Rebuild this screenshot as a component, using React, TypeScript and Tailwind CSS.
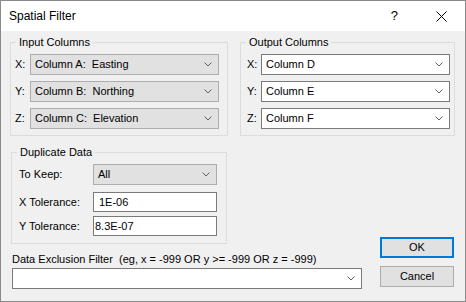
import React from "react";

const Chevron = () => (
  <svg width="8" height="5" viewBox="0 0 8 5" className="shrink-0">
    <polyline points="0.5,0.5 4,4 7.5,0.5" fill="none" stroke="#606060" strokeWidth="1" />
  </svg>
);

function Combo({ text, grey, className }: { text: string; grey?: boolean; className?: string }) {
  return (
    <div
      className={
        "h-[21px] flex items-center justify-between pl-[4px] pr-[6px] border " +
        (grey ? "bg-[#e1e1e1] border-[#adadad] " : "bg-white border-[#7a7a7a] ") +
        (className ?? "")
      }
    >
      <span className="whitespace-pre leading-[13px]">{text}</span>
      <Chevron />
    </div>
  );
}

export default function App() {
  return (
    <div className="w-[466px] h-[302px] border border-[#8a8a8a] bg-[#f0f0f0] flex flex-col text-[11px] leading-[13px] text-black font-['Liberation_Sans',Arial,sans-serif]">
      {/* Title bar */}
      <div className="h-[30px] bg-white flex items-center pl-[8px] shrink-0">
        <span className="text-[12px] leading-[16px] flex-1">Spatial Filter</span>
        <span className="text-[13px] leading-[16px] mr-[38px]">?</span>
        <svg width="11" height="11" viewBox="0 0 11 11" className="mr-[18px]">
          <path d="M0.5 0.5 L10.5 10.5 M10.5 0.5 L0.5 10.5" stroke="#000" strokeWidth="1" />
        </svg>
      </div>

      {/* Body */}
      <div className="flex flex-col pl-[9px] pt-[5px]">
        {/* Row 1 */}
        <div className="flex">
          <fieldset className="w-[218px] border border-[#dcdcdc]">
            <legend className="ml-[5px] px-[3px] leading-[13px]">Input Columns</legend>
            <div className="flex flex-col gap-[6px] pt-[5px] pb-[6px] pl-[4px] pr-[8px]">
              {[
                ["X:", "Column A:  Easting"],
                ["Y:", "Column B:  Northing"],
                ["Z:", "Column C:  Elevation"],
              ].map(([l, t]) => (
                <div key={l} className="flex items-center">
                  <span className="w-[15px]">{l}</span>
                  <Combo text={t} grey className="flex-1" />
                </div>
              ))}
            </div>
          </fieldset>
          <fieldset className="w-[215px] ml-[12px] border border-[#dcdcdc]">
            <legend className="ml-[5px] px-[3px] leading-[13px]">Output Columns</legend>
            <div className="flex flex-col gap-[6px] pt-[5px] pb-[6px] pl-[6px] pr-[4px]">
              {[
                ["X:", "Column D"],
                ["Y:", "Column E"],
                ["Z:", "Column F"],
              ].map(([l, t]) => (
                <div key={l} className="flex items-center">
                  <span className="w-[14px]">{l}</span>
                  <Combo text={t} className="flex-1" />
                </div>
              ))}
            </div>
          </fieldset>
        </div>

        {/* Row 2 */}
        <div className="flex mt-[10px]">
          <div className="w-[352px] flex flex-col">
            <fieldset className="w-[216px] ml-[1px] border border-[#dcdcdc]">
              <legend className="ml-[5px] px-[3px] leading-[13px]">Duplicate Data</legend>
              <div className="flex flex-col pt-[5px] pb-[7px] pl-[7px] pr-[9px]">
                <div className="flex items-center">
                  <span className="w-[74px]">To Keep:</span>
                  <Combo text="All" grey className="flex-1" />
                </div>
                <div className="flex items-center mt-[7px]">
                  <span className="w-[74px]">X Tolerance:</span>
                  <div className="flex-1 h-[20px] bg-white border border-[#7a7a7a] flex items-center pl-[5px]">1E-06</div>
                </div>
                <div className="flex items-center mt-[4px]">
                  <span className="w-[74px]">Y Tolerance:</span>
                  <div className="flex-1 h-[20px] bg-white border border-[#7a7a7a] flex items-center pl-[1px]">8.3E-07</div>
                </div>
              </div>
            </fieldset>
            <div className="ml-[2px] mt-[9px] whitespace-pre">Data Exclusion Filter  (eg, x = -999 OR y &gt;= -999 OR z = -999)</div>
            <Combo text="" className="ml-[2px] mt-[2px] w-[350px] pr-[5px]" />
          </div>
          <div className="ml-[18px] w-[74px] flex flex-col justify-end pb-[2px]">
            <button className="h-[21px] bg-[#e1e1e1] border-2 border-[#0078d7] text-[11px] leading-[13px]">OK</button>
            <button className="h-[21px] mt-[8px] bg-[#e1e1e1] border border-[#adadad] text-[11px] leading-[13px]">Cancel</button>
          </div>
        </div>
      </div>
    </div>
  );
}
